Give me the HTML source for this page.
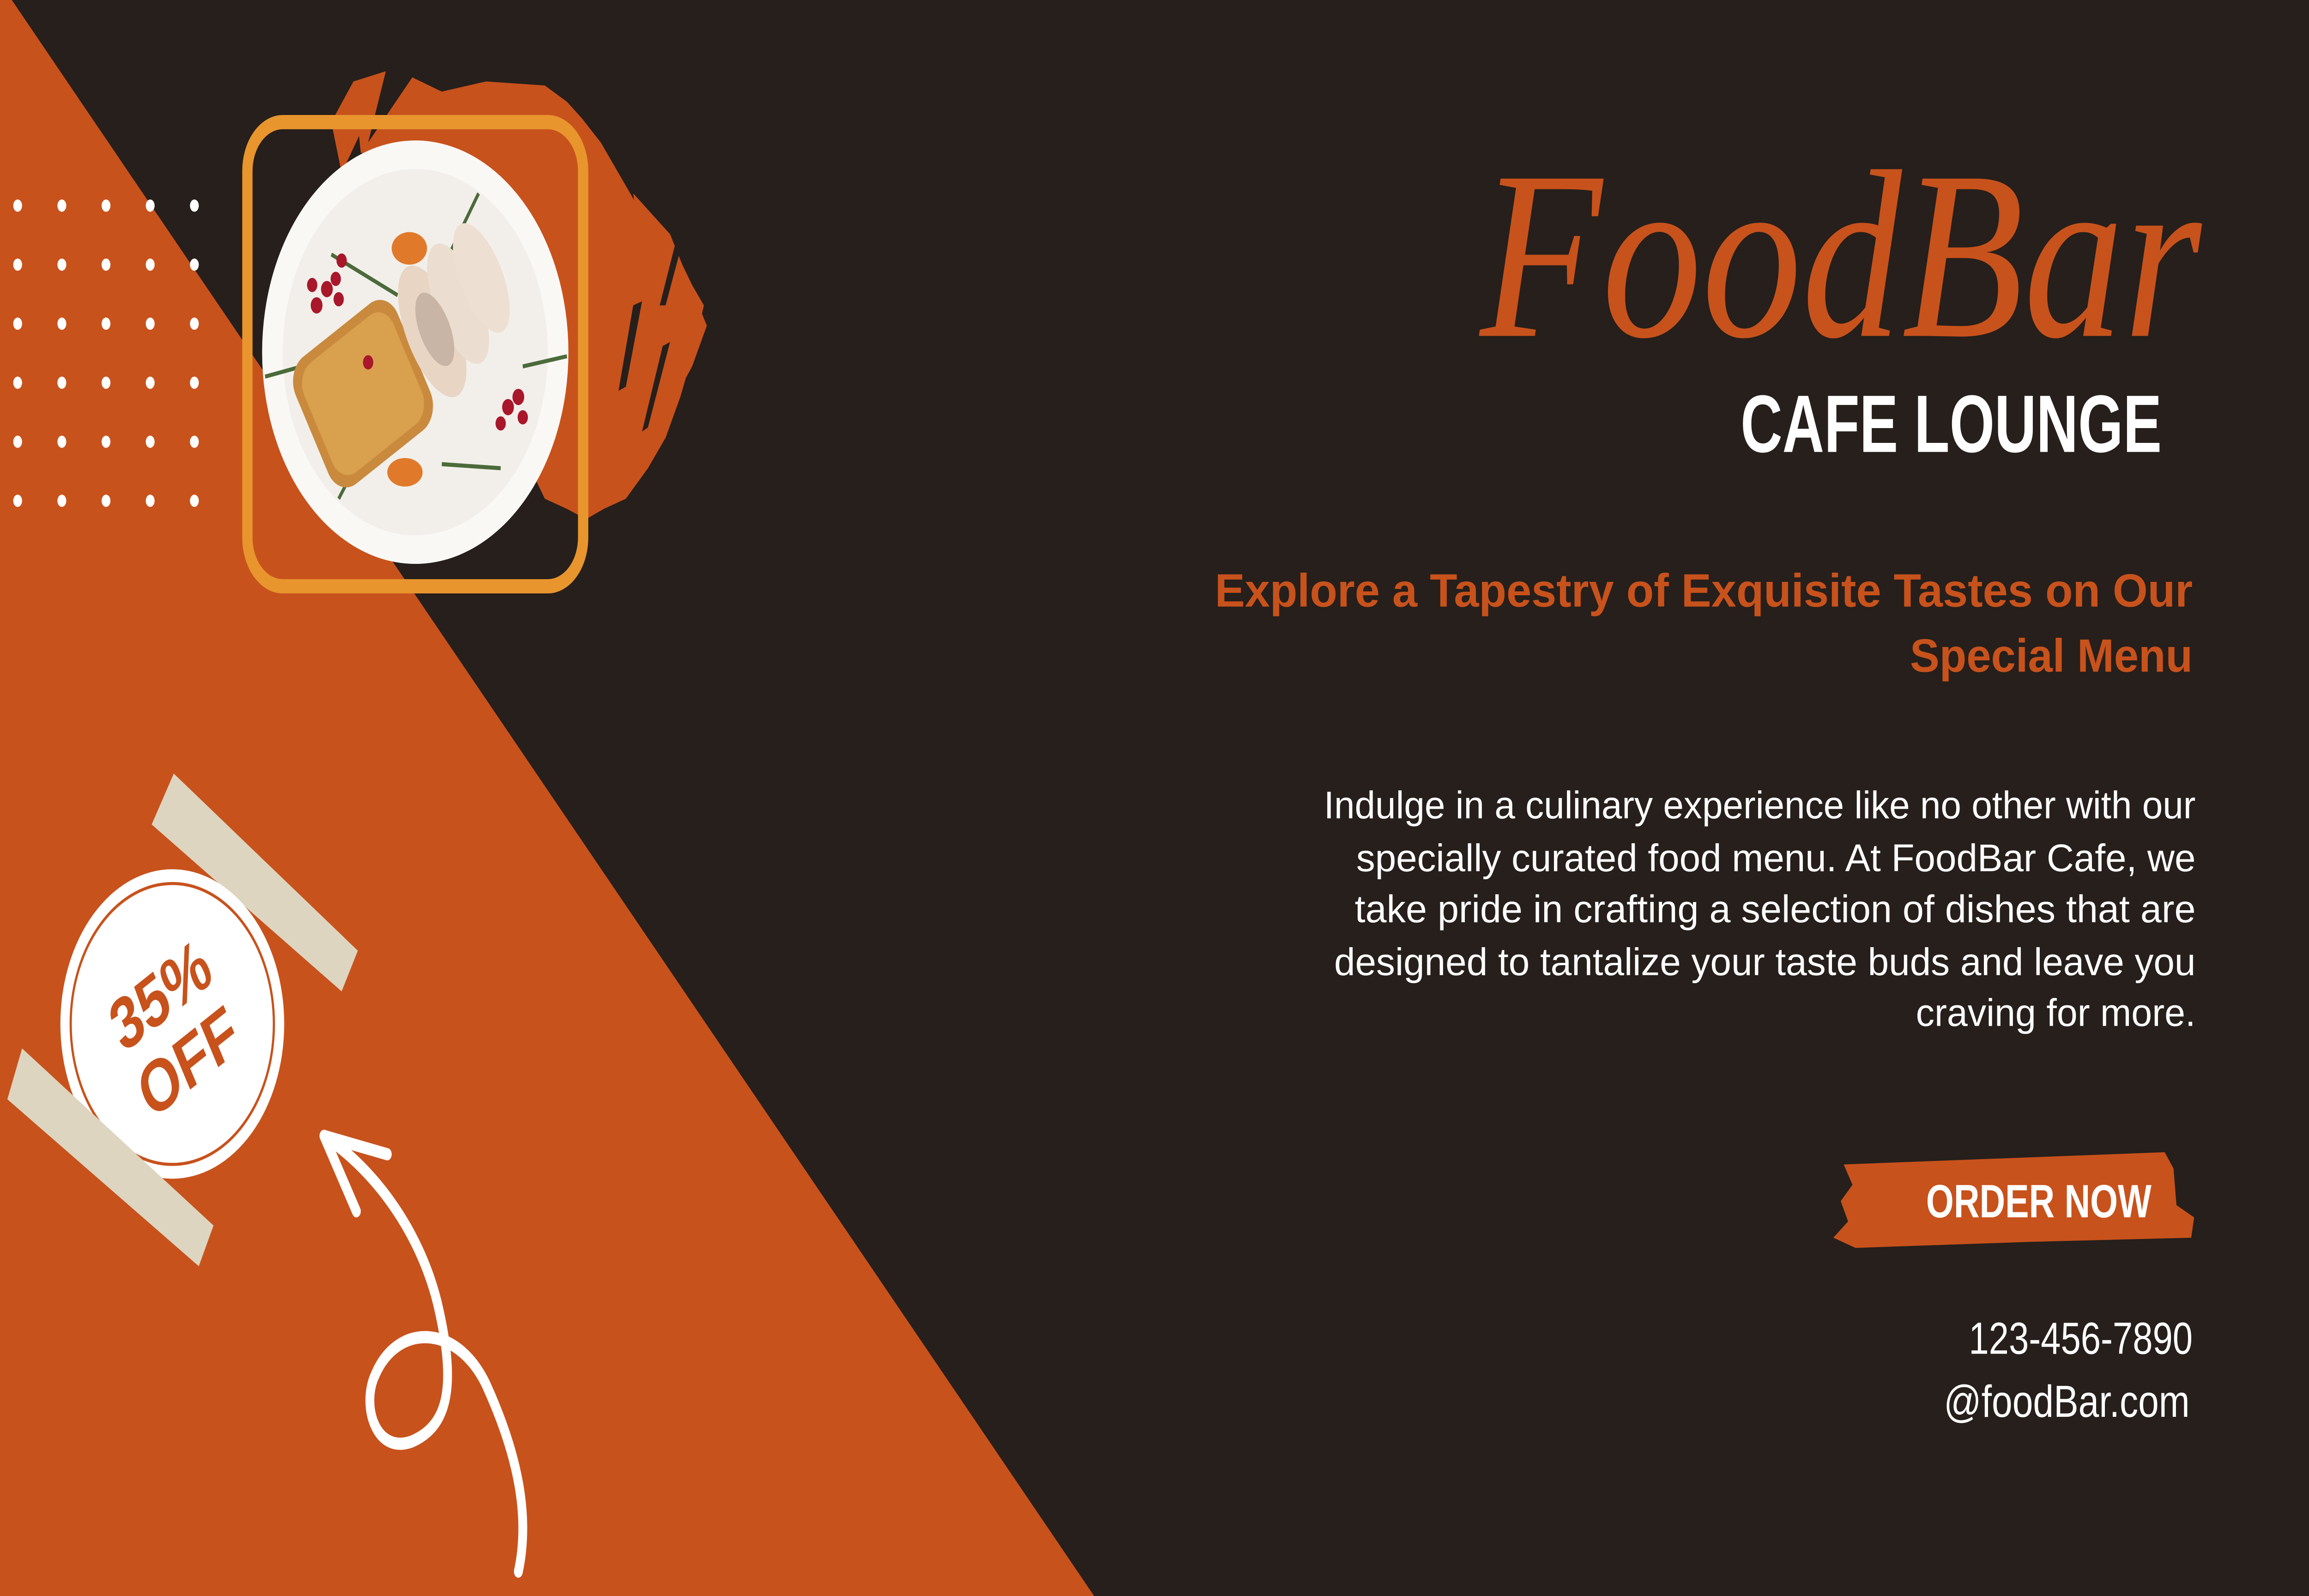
<!DOCTYPE html>
<html><head><meta charset="utf-8"><style>
html,body{margin:0;padding:0;background:#261F1B;overflow:hidden;width:100%;height:100%}
svg{display:block;position:fixed;left:0;top:0;width:100vw;height:100vh}
</style></head><body>
<svg viewBox="0 0 1568 784" preserveAspectRatio="none" xmlns="http://www.w3.org/2000/svg" font-family="Liberation Sans, sans-serif">
<rect width="1568" height="784" fill="#261F1B"/>
<polygon points="0,0 8,0 743,784 0,784" fill="#C8521C"/>
<g fill="#C8521C">
<polygon points="240,40 262,35 250,70 280,38 300,45 330,40 370,42 385,50 395,58 408,70 420,85 432,100 445,110 460,125 470,140 478,150 470,175 462,195 452,215 440,230 425,245 410,250 398,255 385,250 370,245 360,230 350,200 330,150 300,100 270,80 245,75"/>
<polygon points="430,95 455,115 480,160 470,180 455,200 440,210 445,170"/>
<polygon points="225,60 240,40 245,65 232,85"/>
</g>
<g fill="#261F1B">
<polygon points="430,150 436,148 425,190 420,192"/>
<polygon points="450,170 455,168 440,210 436,212"/>
<polygon points="462,110 466,112 452,150 448,150"/>
</g>
<g fill="#fff">
<circle cx="12" cy="101" r="3"/><circle cx="42" cy="101" r="3"/><circle cx="72" cy="101" r="3"/><circle cx="102" cy="101" r="3"/><circle cx="132" cy="101" r="3"/>
<circle cx="12" cy="130" r="3"/><circle cx="42" cy="130" r="3"/><circle cx="72" cy="130" r="3"/><circle cx="102" cy="130" r="3"/><circle cx="132" cy="130" r="3"/>
<circle cx="12" cy="159" r="3"/><circle cx="42" cy="159" r="3"/><circle cx="72" cy="159" r="3"/><circle cx="102" cy="159" r="3"/><circle cx="132" cy="159" r="3"/>
<circle cx="12" cy="188" r="3"/><circle cx="42" cy="188" r="3"/><circle cx="72" cy="188" r="3"/><circle cx="102" cy="188" r="3"/><circle cx="132" cy="188" r="3"/>
<circle cx="12" cy="217" r="3"/><circle cx="42" cy="217" r="3"/><circle cx="72" cy="217" r="3"/><circle cx="102" cy="217" r="3"/><circle cx="132" cy="217" r="3"/>
<circle cx="12" cy="246" r="3"/><circle cx="42" cy="246" r="3"/><circle cx="72" cy="246" r="3"/><circle cx="102" cy="246" r="3"/><circle cx="132" cy="246" r="3"/>
</g>
<rect x="168" y="60" width="228" height="228" rx="24" fill="none" stroke="#E8952E" stroke-width="7"/>
<ellipse cx="282" cy="173" rx="104" ry="104" fill="#FAF8F5"/>
<ellipse cx="282" cy="173" rx="90" ry="90" fill="#F2EFEB"/>
<g stroke="#4C6A3A" stroke-width="2" fill="none">
<path d="M180,185 L230,175"/><path d="M230,245 L255,210"/><path d="M300,228 L340,230"/><path d="M295,140 L325,95"/><path d="M225,125 L270,145"/><path d="M355,180 L385,175"/>
</g>
<g transform="rotate(-30 285 170)">
<rect x="200" y="135" width="80" height="72" rx="14" fill="#C98A3E"/>
<rect x="205" y="140" width="70" height="62" rx="12" fill="#D9A04E"/>
<ellipse cx="296" cy="168" rx="17" ry="36" fill="#E8D5C4"/>
<ellipse cx="318" cy="165" rx="15" ry="33" fill="#EBDDD0"/>
<ellipse cx="338" cy="162" rx="14" ry="30" fill="#EDE0D3"/>
<ellipse cx="298" cy="168" rx="10" ry="20" fill="#C9B5A5"/>
</g>
<g fill="#A8172A">
<circle cx="215" cy="150" r="4"/><circle cx="222" cy="142" r="4"/><circle cx="212" cy="140" r="3.5"/><circle cx="230" cy="147" r="3.5"/><circle cx="228" cy="137" r="3.5"/><circle cx="232" cy="128" r="3.5"/>
<circle cx="345" cy="200" r="4"/><circle cx="352" cy="195" r="4"/><circle cx="340" cy="208" r="3.5"/><circle cx="355" cy="205" r="3.5"/><circle cx="250" cy="178" r="3.5"/>
</g>
<g fill="#E07A2A"><ellipse cx="278" cy="122" rx="12" ry="8"/><ellipse cx="275" cy="232" rx="12" ry="7"/></g>
<polygon points="118,380 243,467 232,487 103,405" fill="#DDD5C0"/>
<circle cx="117" cy="503" r="76" fill="#fff"/>
<circle cx="117" cy="503" r="69" fill="none" stroke="#C8521C" stroke-width="1.5"/>
<text transform="rotate(-30 117 503)" text-anchor="middle" font-weight="bold" font-size="36" fill="#C8521C"><tspan x="117" y="499">35%</tspan><tspan x="117" y="537">OFF</tspan></text>
<polygon points="15,515 145,602 135,622 5,540" fill="#DDD5C0"/>
<g stroke="#fff" stroke-width="6" fill="none" stroke-linecap="round">
<path d="M220,558 C255,575 285,605 297,640 C310,680 305,700 280,708 C255,715 245,690 255,675 C270,650 310,650 330,680 C352,715 360,745 352,772"/>
<path d="M220,558 L263,567"/><path d="M220,558 L242,595"/>
</g>
<polygon points="1252,572 1470,566 1476,574 1478,592 1490,598 1488,608 1380,610 1260,613 1245,608 1255,600 1250,590 1258,582" fill="#C8521C"/>
<text x="1005" y="165" textLength="490" lengthAdjust="spacingAndGlyphs" font-family="Liberation Serif, serif" font-style="italic" font-size="118" fill="#C8521C">FoodBar</text>
<text x="1182" y="222" textLength="286" lengthAdjust="spacingAndGlyphs" font-weight="bold" font-size="40" fill="#fff">CAFE LOUNGE</text>
<g font-weight="bold" font-size="23" fill="#C8521C">
<text x="825" y="298" textLength="664" lengthAdjust="spacingAndGlyphs">Explore a Tapestry of Exquisite Tastes on Our</text>
<text x="1297" y="330" textLength="192" lengthAdjust="spacingAndGlyphs">Special Menu</text>
</g>
<g font-size="19" fill="#fff">
<text x="899" y="402" textLength="592" lengthAdjust="spacingAndGlyphs">Indulge in a culinary experience like no other with our</text>
<text x="921" y="428" textLength="570" lengthAdjust="spacingAndGlyphs">specially curated food menu. At FoodBar Cafe, we</text>
<text x="920" y="453" textLength="571" lengthAdjust="spacingAndGlyphs">take pride in crafting a selection of dishes that are</text>
<text x="906" y="479" textLength="585" lengthAdjust="spacingAndGlyphs">designed to tantalize your taste buds and leave you</text>
<text x="1301" y="504" textLength="190" lengthAdjust="spacingAndGlyphs">craving for more.</text>
</g>
<text x="1308" y="598" textLength="153" lengthAdjust="spacingAndGlyphs" font-weight="bold" font-size="23" fill="#fff">ORDER NOW</text>
<g font-size="22" fill="#fff">
<text x="1337" y="665" textLength="152" lengthAdjust="spacingAndGlyphs">123-456-7890</text>
<text x="1320" y="696" textLength="167" lengthAdjust="spacingAndGlyphs">@foodBar.com</text>
</g>
</svg>
</body></html>
